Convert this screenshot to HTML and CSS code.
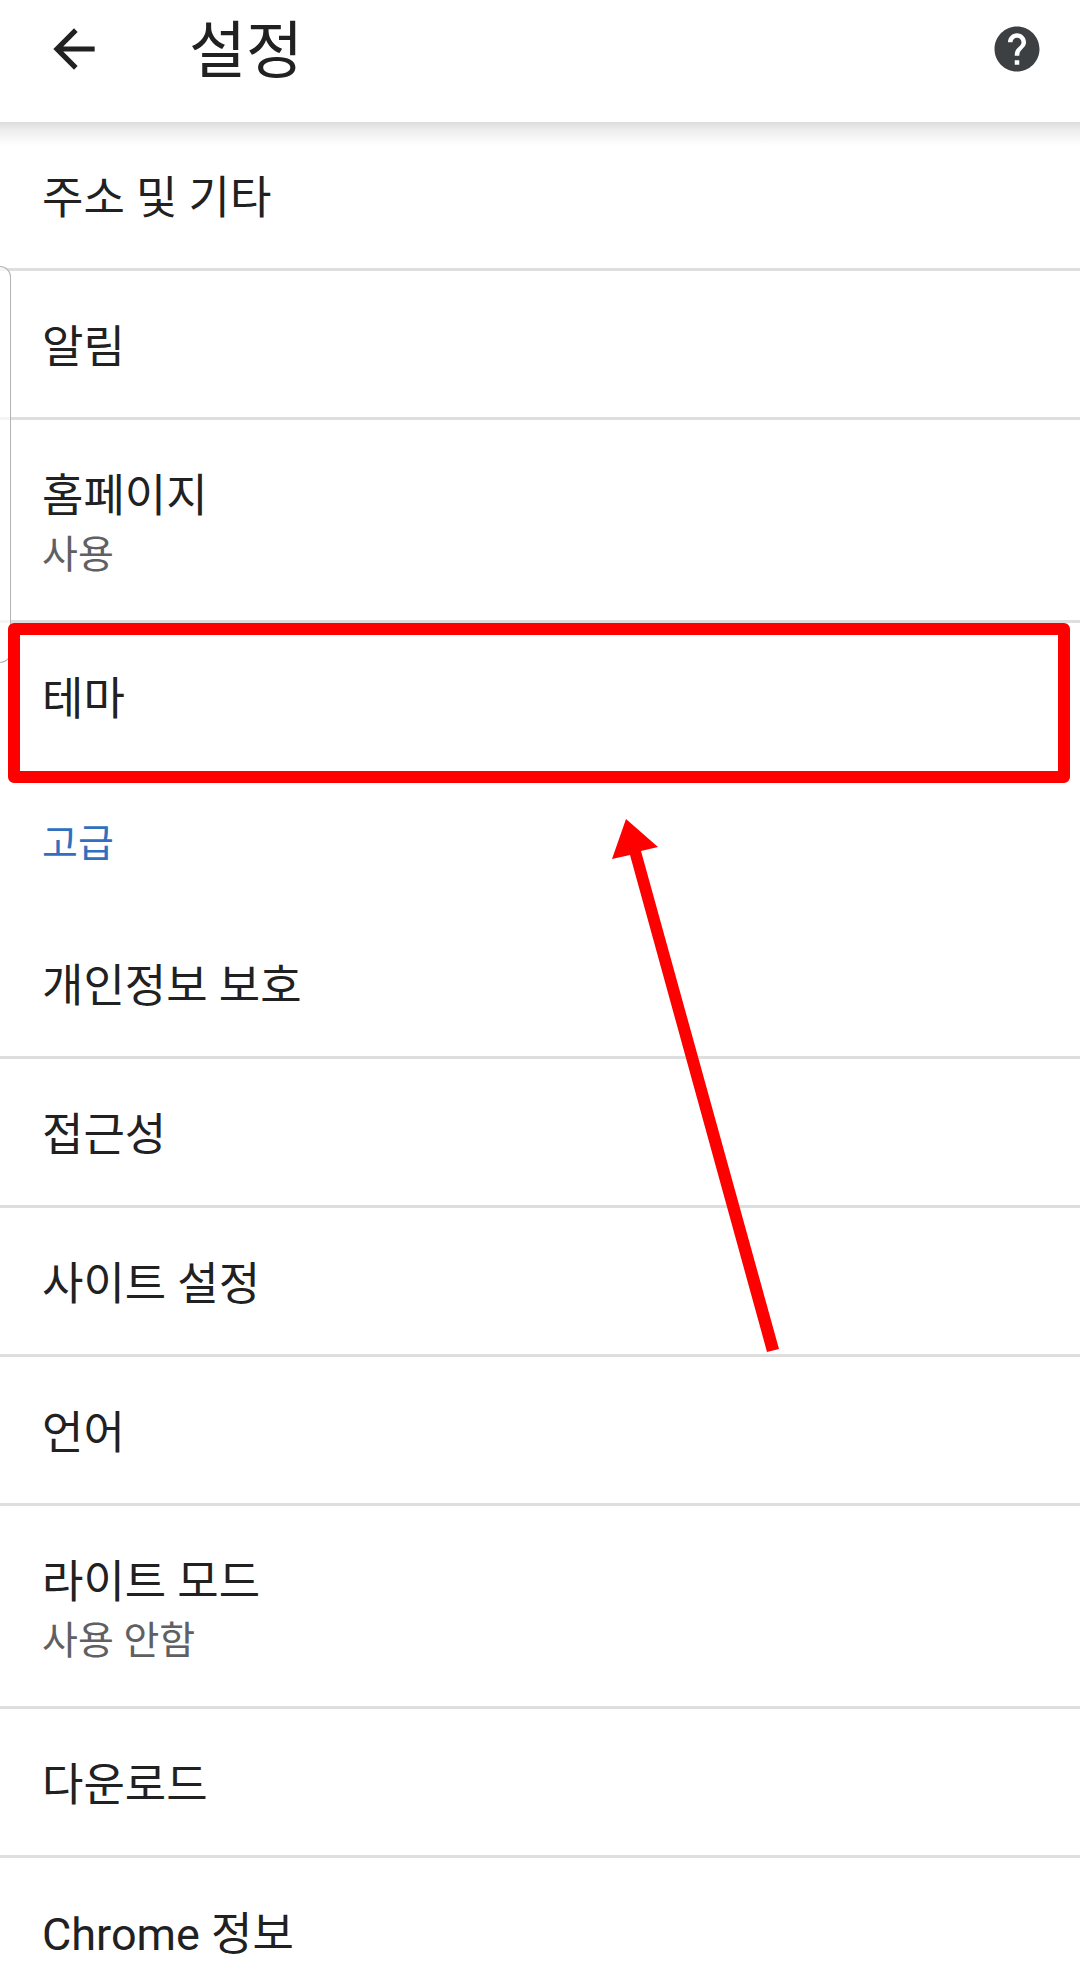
FILE: index.html
```html
<!DOCTYPE html>
<html lang="ko">
<head>
    <meta charset="UTF-8">
    <meta name="viewport" content="width=device-width, initial-scale=1.0">
    <title>설정</title>
    <link rel="stylesheet" href="styles.css">
</head>
<body>

    <header class="toolbar">
        <button class="icon-btn" aria-label="뒤로">
            <svg class="back-icon" viewBox="0 0 24 24"><path d="M20 11H7.83l5.59-5.59L12 4l-8 8 8 8 1.41-1.41L7.83 13H20v-2z"/></svg>
        </button>
        <h1>설정</h1>
        <button class="icon-btn" aria-label="도움말">
            <svg class="help-icon" viewBox="0 0 24 24">
                <path d="M12 2C6.48 2 2 6.48 2 12s4.48 10 10 10 10-4.48 10-10S17.52 2 12 2zm1 17h-2v-2h2v2zm2.07-7.75l-.9.92C13.45 12.9 13 13.5 13 15h-2v-.5c0-1.1.45-2.1 1.17-2.83l1.24-1.26c.37-.36.59-.86.59-1.41 0-1.1-.9-2-2-2s-2 .9-2 2H8c0-2.21 1.79-4 4-4s4 1.79 4 4c0 .88-.36 1.68-.93 2.25z"/>
            </svg>
        </button>
    </header>

    <main class="settings">
        <ul class="list">
            <li><a class="row" href="#">주소 및 기타</a></li>
            <li><a class="row" href="#">알림</a></li>
            <li><a class="row" href="#">홈페이지<span class="summary">사용</span></a></li>
            <li><a class="row highlight" href="#">테마</a></li>
        </ul>

        <h2>고급</h2>

        <ul class="list">
            <li><a class="row" href="#">개인정보 보호</a></li>
            <li><a class="row" href="#">접근성</a></li>
            <li><a class="row" href="#">사이트 설정</a></li>
            <li><a class="row" href="#">언어</a></li>
            <li><a class="row" href="#">라이트 모드<span class="summary">사용 안함</span></a></li>
            <li><a class="row" href="#">다운로드</a></li>
            <li><a class="row last" href="#">Chrome 정보</a></li>
        </ul>

        <div class="edge-panel"></div>

        <svg class="arrow" viewBox="0 0 168 534">
            <path d="M14 0L46 28L29 32L167 530L155 533L18 36L0 40Z"/>
        </svg>
    </main>

</body>
</html>
```

FILE: styles.css
```css
* {
    margin: 0;
    padding: 0;
    box-sizing: border-box;
}
body {
    background-color: #ffffff;
    color: #212121;
    font-family: Roboto, "Noto Sans CJK KR", sans-serif;
}
/* Toolbar */
.toolbar {
    position: relative;
    display: flex;
    align-items: center;
    padding: 0 36px 24px 43px;
}
.toolbar::after {
    content: "";
    position: absolute;
    top: 100%;
    left: 0;
    right: 0;
    height: 24px;
    background: linear-gradient(#dcdcdc, #eeeeee 35%, #ffffff);
}
.toolbar h1 {
    flex: 1;
    margin-left: 84px;
    padding-top: 6px;
    font-size: 62px;
    font-weight: 400;
    line-height: 92px;
}
.icon-btn {
    display: flex;
    background: none;
    border: none;
    cursor: pointer;
}
.back-icon {
    width: 62px;
    height: 62px;
    fill: #212121;
}
.help-icon {
    width: 54px;
    height: 54px;
    fill: #3c4043;
}
/* Settings list */
.settings {
    position: relative;
}
.list {
    list-style: none;
}
.row {
    display: block;
    padding: 45px 42px 38px;
    border-bottom: 3px solid #dedede;
    color: inherit;
    font-size: 45px;
    line-height: 63px;
    text-decoration: none;
}
.summary {
    display: block;
    color: #5f6063;
    font-size: 39px;
    line-height: 54px;
}
.last {
    border-bottom: none;
    padding-bottom: 15px;
}
h2 {
    padding: 48px 42px 39px;
    color: #2f70bf;
    font-size: 39px;
    font-weight: 400;
    line-height: 54px;
}
/* Marked row */
.highlight {
    position: relative;
    z-index: 1;
    border-bottom: none;
}
.highlight::after {
    content: "";
    position: absolute;
    top: 0;
    bottom: -14px;
    left: 8px;
    right: 10px;
    border: 12px solid #ff0000;
    border-radius: 6px;
}
.edge-panel {
    position: absolute;
    top: 144px;
    left: 0;
    width: 11px;
    height: 397px;
    background: rgba(255, 255, 255, 0.7);
    border: 1px solid #b4b4b4;
    border-left: none;
    border-radius: 0 11px 11px 0;
}
.arrow {
    position: absolute;
    top: 697px;
    left: 612px;
    width: 168px;
    height: 534px;
    fill: #ff0000;
}
```
